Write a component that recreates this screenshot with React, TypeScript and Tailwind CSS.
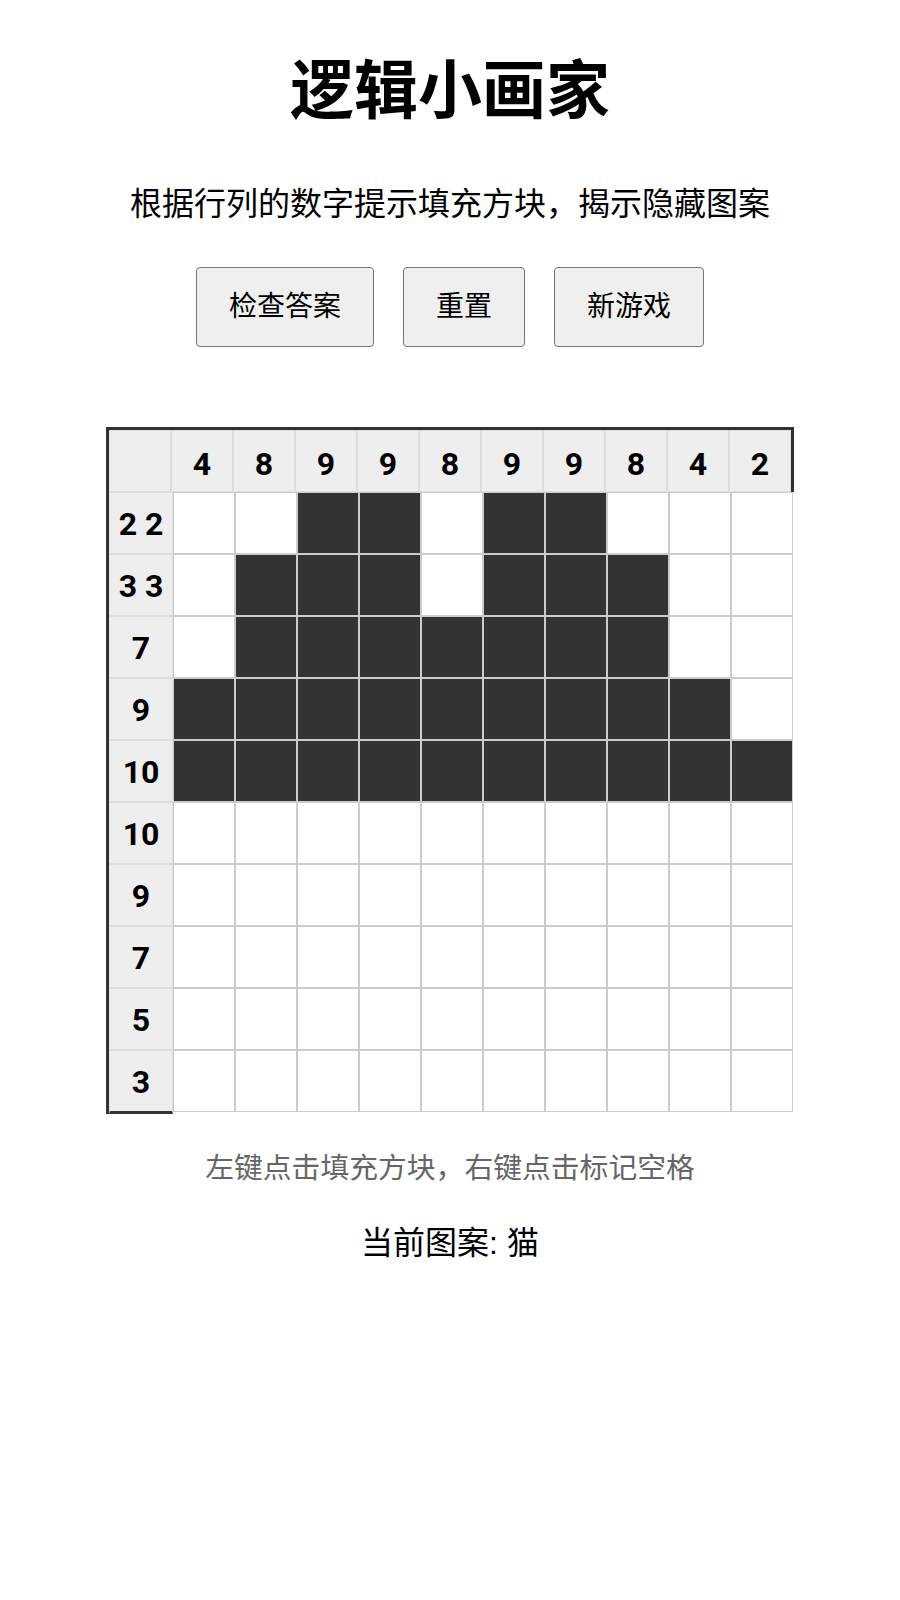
import React from 'react';

const colClues = ['4', '8', '9', '9', '8', '9', '9', '8', '4', '2'];
const rowClues = ['2 2', '3 3', '7', '9', '10', '10', '9', '7', '5', '3'];

// 1 = filled, 0 = empty
const board: number[][] = [
  [0, 0, 1, 1, 0, 1, 1, 0, 0, 0],
  [0, 1, 1, 1, 0, 1, 1, 1, 0, 0],
  [0, 1, 1, 1, 1, 1, 1, 1, 0, 0],
  [1, 1, 1, 1, 1, 1, 1, 1, 1, 0],
  [1, 1, 1, 1, 1, 1, 1, 1, 1, 1],
  [0, 0, 0, 0, 0, 0, 0, 0, 0, 0],
  [0, 0, 0, 0, 0, 0, 0, 0, 0, 0],
  [0, 0, 0, 0, 0, 0, 0, 0, 0, 0],
  [0, 0, 0, 0, 0, 0, 0, 0, 0, 0],
  [0, 0, 0, 0, 0, 0, 0, 0, 0, 0],
];

const buttons = ['检查答案', '重置', '新游戏'];

const clueFont = "font-['Roboto','Noto_Sans_CJK_SC',sans-serif] text-[32px] leading-[38px] font-bold";

const App: React.FC = () => (
  <div className="min-h-screen bg-white flex flex-col items-center pt-[53px] text-black font-['Liberation_Sans','Noto_Sans_CJK_SC',sans-serif]">
    <h1 className="text-[64px] leading-[77px] font-bold">逻辑小画家</h1>
    <p className="mt-[55px] text-[32px] leading-[38px]">根据行列的数字提示填充方块，揭示隐藏图案</p>

    <div className="mt-[44px] flex gap-[29px]">
      {buttons.map((label) => (
        <button
          key={label}
          className="px-[32px] py-[19px] text-[28px] leading-[40px] bg-[#efefef] border-[1.5px] border-[#767676] rounded-[4px]"
        >
          {label}
        </button>
      ))}
    </div>

    <div className="mt-[80px] border-l-[3px] border-t-[3px] border-[#333333]">
      <div className="flex border-r-[3px] border-[#333333]">
        <div className="w-[62px] h-[62px] bg-[#eeeeee] border border-[#dddddd]" />
        {colClues.map((clue, i) => (
          <div
            key={i}
            className={`w-[62px] h-[62px] bg-[#eeeeee] border border-[#dddddd] flex items-center justify-center pt-[5px] ${clueFont}`}
          >
            {clue}
          </div>
        ))}
      </div>
      {board.map((row, r) => (
        <div key={r} className="flex items-start">
          <div
            className={`w-[64px] bg-[#eeeeee] border border-[#dddddd] flex items-center justify-center pt-[1px] ${clueFont} ${
              r === board.length - 1 ? 'h-[64px] border-b-[3px] border-b-[#333333]' : 'h-[62px]'
            }`}
          >
            {rowClues[r]}
          </div>
          {row.map((cell, c) => (
            <div
              key={c}
              className={`w-[62px] h-[62px] border border-[#cccccc] ${cell ? 'bg-[#333333]' : 'bg-white'}`}
            />
          ))}
        </div>
      ))}
    </div>

    <p className="mt-[36px] text-[28.8px] leading-[36px] text-[#666666]">左键点击填充方块，右键点击标记空格</p>
    <p className="mt-[38px] text-[32px] leading-[38px]">当前图案: 猫</p>
  </div>
);

export default App;
